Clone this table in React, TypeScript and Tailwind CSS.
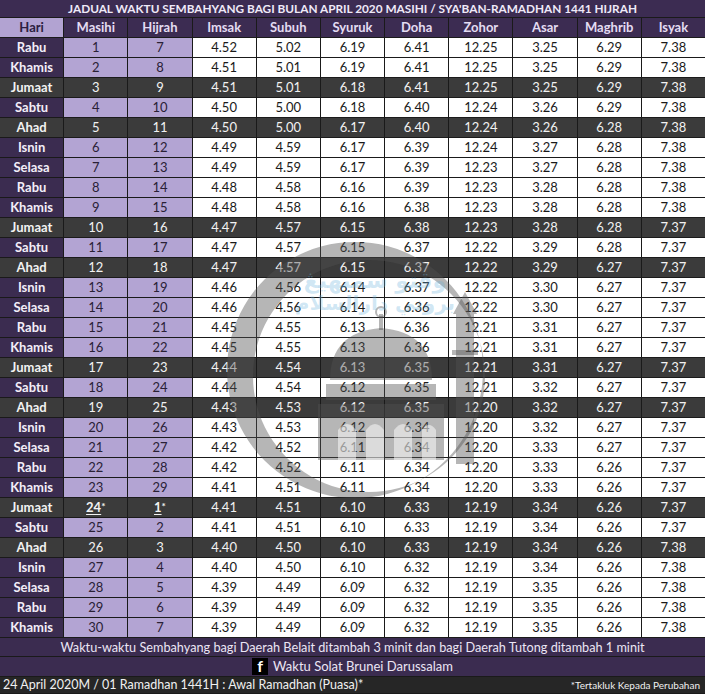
import React from 'react';

type Row = [string, string, string, string, string, string, string, string, string, string, string];

const rows: Row[] = [
  ['Rabu', '1', '7', '4.52', '5.02', '6.19', '6.41', '12.25', '3.25', '6.29', '7.38'],
  ['Khamis', '2', '8', '4.51', '5.01', '6.19', '6.41', '12.25', '3.25', '6.29', '7.38'],
  ['Jumaat', '3', '9', '4.51', '5.01', '6.18', '6.41', '12.25', '3.25', '6.29', '7.38'],
  ['Sabtu', '4', '10', '4.50', '5.00', '6.18', '6.40', '12.24', '3.26', '6.29', '7.38'],
  ['Ahad', '5', '11', '4.50', '5.00', '6.17', '6.40', '12.24', '3.26', '6.28', '7.38'],
  ['Isnin', '6', '12', '4.49', '4.59', '6.17', '6.39', '12.24', '3.27', '6.28', '7.38'],
  ['Selasa', '7', '13', '4.49', '4.59', '6.17', '6.39', '12.23', '3.27', '6.28', '7.38'],
  ['Rabu', '8', '14', '4.48', '4.58', '6.16', '6.39', '12.23', '3.28', '6.28', '7.38'],
  ['Khamis', '9', '15', '4.48', '4.58', '6.16', '6.38', '12.23', '3.28', '6.28', '7.38'],
  ['Jumaat', '10', '16', '4.47', '4.57', '6.15', '6.38', '12.23', '3.28', '6.28', '7.37'],
  ['Sabtu', '11', '17', '4.47', '4.57', '6.15', '6.37', '12.22', '3.29', '6.28', '7.37'],
  ['Ahad', '12', '18', '4.47', '4.57', '6.15', '6.37', '12.22', '3.29', '6.27', '7.37'],
  ['Isnin', '13', '19', '4.46', '4.56', '6.14', '6.37', '12.22', '3.30', '6.27', '7.37'],
  ['Selasa', '14', '20', '4.46', '4.56', '6.14', '6.36', '12.22', '3.30', '6.27', '7.37'],
  ['Rabu', '15', '21', '4.45', '4.55', '6.13', '6.36', '12.21', '3.31', '6.27', '7.37'],
  ['Khamis', '16', '22', '4.45', '4.55', '6.13', '6.36', '12.21', '3.31', '6.27', '7.37'],
  ['Jumaat', '17', '23', '4.44', '4.54', '6.13', '6.35', '12.21', '3.31', '6.27', '7.37'],
  ['Sabtu', '18', '24', '4.44', '4.54', '6.12', '6.35', '12.21', '3.32', '6.27', '7.37'],
  ['Ahad', '19', '25', '4.43', '4.53', '6.12', '6.35', '12.20', '3.32', '6.27', '7.37'],
  ['Isnin', '20', '26', '4.43', '4.53', '6.12', '6.34', '12.20', '3.32', '6.27', '7.37'],
  ['Selasa', '21', '27', '4.42', '4.52', '6.11', '6.34', '12.20', '3.33', '6.27', '7.37'],
  ['Rabu', '22', '28', '4.42', '4.52', '6.11', '6.34', '12.20', '3.33', '6.26', '7.37'],
  ['Khamis', '23', '29', '4.41', '4.51', '6.11', '6.34', '12.20', '3.33', '6.26', '7.37'],
  ['Jumaat', '24', '1', '4.41', '4.51', '6.10', '6.33', '12.19', '3.34', '6.26', '7.37'],
  ['Sabtu', '25', '2', '4.41', '4.51', '6.10', '6.33', '12.19', '3.34', '6.26', '7.37'],
  ['Ahad', '26', '3', '4.40', '4.50', '6.10', '6.33', '12.19', '3.34', '6.26', '7.38'],
  ['Isnin', '27', '4', '4.40', '4.50', '6.10', '6.32', '12.19', '3.34', '6.26', '7.38'],
  ['Selasa', '28', '5', '4.39', '4.49', '6.09', '6.32', '12.19', '3.35', '6.26', '7.38'],
  ['Rabu', '29', '6', '4.39', '4.49', '6.09', '6.32', '12.19', '3.35', '6.26', '7.38'],
  ['Khamis', '30', '7', '4.39', '4.49', '6.09', '6.32', '12.19', '3.35', '6.26', '7.38'],
];

const headers = ['Hari', 'Masihi', 'Hijrah', 'Imsak', 'Subuh', 'Syuruk', 'Doha', 'Zohor', 'Asar', 'Maghrib', 'Isyak'];

const isDark = (day: string) => day === 'Jumaat' || day === 'Ahad';

// faint logo stamped over the middle of the table
function Watermark() {
  return (
    <svg
      className="pointer-events-none absolute left-[200px] top-[230px]"
      width="310"
      height="280"
      viewBox="0 0 310 280"
    >
      <path
        fillRule="evenodd"
        fill="rgba(80,80,80,0.42)"
        d="M155 12 a128 128 0 1 0 0.01 0z M169 30 a116 116 0 1 0 0.01 0z"
      />
      <g fill="rgba(80,80,80,0.42)">
        {/* dome + finial */}
        <path d="M130 150 q0 -48 51 -52 q51 4 51 52z" />
        <rect x="179" y="84" width="4" height="16" />
        <circle cx="181" cy="82" r="5" fill="none" stroke="rgba(80,80,80,0.42)" strokeWidth="2" />
        {/* hall */}
        <rect x="126" y="154" width="110" height="16" />
        <rect x="118" y="174" width="126" height="56" />
        {/* minaret */}
        <rect x="256" y="84" width="18" height="150" />
        <path d="M265 62 l12 22 h-24z" />
        <rect x="252" y="120" width="26" height="5" />
      </g>
      <g fill="rgba(255,255,255,0.5)">
        <path d="M138 230 v-30 q9 -12 18 0 v30z" />
        <path d="M166 230 v-30 q9 -12 18 0 v30z" />
        <path d="M194 230 v-30 q9 -12 18 0 v30z" />
        <path d="M222 230 v-30 q7 -10 14 0 v30z" />
      </g>
      <text
        x="175"
        y="58"
        textAnchor="middle"
        fontSize="22"
        fontWeight="bold"
        fontFamily="DejaVu Sans, sans-serif"
        fill="rgba(110,180,220,0.32)"
      >
        وقتو سمبهيڠ
      </text>
      <text
        x="175"
        y="80"
        textAnchor="middle"
        fontSize="20"
        fontWeight="bold"
        fontFamily="DejaVu Sans, sans-serif"
        fill="rgba(110,180,220,0.32)"
      >
        بروني دارالسلام
      </text>
    </svg>
  );
}

export default function App() {
  return (
    <div className="w-[705px] h-[694px] bg-[#1a1a1a] text-[13px] leading-none font-['Lato','Liberation_Sans',sans-serif] relative overflow-hidden">
      <div className="grid grid-cols-[repeat(11,1fr)] gap-px bg-[#1a1a1a]">
        <div className="col-span-11 h-[17px] bg-[#3c2c52] text-[#efe9f8] font-bold text-[11.8px] flex items-center justify-center">
          JADUAL WAKTU SEMBAHYANG BAGI BULAN APRIL 2020 MASIHI / SYA'BAN-RAMADHAN 1441 HIJRAH
        </div>
        {headers.map((h, i) => (
          <div
            key={h}
            className={
              i === 0
                ? 'h-[19px] bg-[#b2a3d2] text-[#2c2040] font-bold flex items-center justify-center'
                : 'h-[19px] bg-[#3c2c52] text-[#e4dcf2] font-bold flex items-center justify-center'
            }
          >
            {h}
          </div>
        ))}
        {rows.map((r, ri) => {
          const dark = isDark(r[0]);
          const special = ri === 23;
          return r.map((c, ci) => {
            let cls = 'h-[19px] flex items-center justify-center ';
            if (dark) {
              cls += 'bg-[#3b3b3b] text-[#f2f2f2] ';
              if (ci === 0) cls += 'font-bold ';
            } else if (ci === 0) {
              cls += 'bg-[#3b2c50] text-[#f3eef9] font-bold ';
            } else if (ci < 3) {
              cls += 'bg-[#b3a4d3] text-[#2a2136] ';
            } else {
              cls += 'bg-white text-[#1a1a1a] ';
            }
            if (special && (ci === 1 || ci === 2)) {
              return (
                <div key={ri + '-' + ci} className={cls + 'font-bold'}>
                  <span className="underline underline-offset-2">{c}</span>
                  <span className="text-[10px] self-start mt-[3px]">*</span>
                </div>
              );
            }
            return (
              <div key={ri + '-' + ci} className={cls}>
                {c}
              </div>
            );
          });
        })}
        <div className="col-span-11 h-[18px] bg-[#3b2c50] text-[#ece6f5] text-[12.7px] flex items-center justify-center">
          Waktu-waktu Sembahyang bagi Daerah Belait ditambah 3 minit dan bagi Daerah Tutong ditambah 1 minit
        </div>
        <div className="col-span-11 h-[19px] bg-[#3b2c50] text-[#ece6f5] flex items-center justify-center gap-[5px]">
          <span className="w-[16px] h-[17px] bg-black text-white font-bold text-[16px] flex items-end justify-center pb-[1px]">
            f
          </span>
          <span>Waktu Solat Brunei Darussalam</span>
        </div>
        <div className="col-span-11 h-[16px] bg-[#262626] text-[#f0f0f0] flex items-center justify-between px-[3px]">
          <span className="text-[12.5px]">24 April 2020M / 01 Ramadhan 1441H : Awal Ramadhan (Puasa)*</span>
          <span className="text-[10px] pr-[2px]">*Tertakluk Kepada Perubahan</span>
        </div>
      </div>
      <Watermark />
    </div>
  );
}
